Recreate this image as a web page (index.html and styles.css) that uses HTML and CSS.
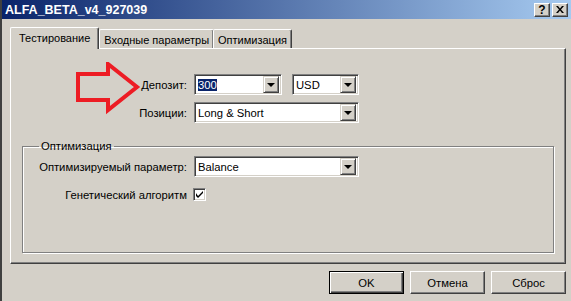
FILE: index.html
```html
<!DOCTYPE html>
<html lang="ru">
<head>
    <meta charset="UTF-8">
    <title>ALFA_BETA_v4_927039</title>
    <link rel="stylesheet" href="styles.css">
</head>
<body>
    <div class="window">
        <!-- заголовок окна -->
        <div class="titlebar">
            <span class="title">ALFA_BETA_v4_927039</span>
            <div class="caption-buttons">
                <button class="caption-btn">?</button>
                <button class="caption-btn">
                    <svg width="8" height="7" viewBox="0 0 8 7"><path d="M0 0h2l2 2.5L6 0h2L5 3.5 8 7H6L4 4.5 2 7H0l3-3.5z" fill="#000"/></svg>
                </button>
            </div>
        </div>

        <!-- вкладки -->
        <div class="tabs">
            <div class="tab active">Тестирование</div>
            <div class="tab">Входные параметры</div>
            <div class="tab">Оптимизация</div>
        </div>

        <div class="panel">
            <div class="form-row">
                <label class="field-label">Депозит:</label>
                <div class="combo combo-sm">
                    <span class="combo-text"><span class="selected">300</span></span>
                    <span class="combo-btn"><i class="tri"></i></span>
                </div>
                <div class="combo combo-xs">
                    <span class="combo-text">USD</span>
                    <span class="combo-btn"><i class="tri"></i></span>
                </div>
            </div>
            <div class="form-row">
                <label class="field-label">Позиции:</label>
                <div class="combo combo-lg">
                    <span class="combo-text">Long &amp; Short</span>
                    <span class="combo-btn"><i class="tri"></i></span>
                </div>
            </div>

            <fieldset class="group">
                <legend>Оптимизация</legend>
                <div class="form-row">
                    <label class="field-label group-label">Оптимизируемый параметр:</label>
                    <div class="combo combo-lg">
                        <span class="combo-text">Balance</span>
                        <span class="combo-btn"><i class="tri"></i></span>
                    </div>
                </div>
                <div class="form-row check-row">
                    <label class="field-label group-label">Генетический алгоритм</label>
                    <span class="checkbox">
                        <svg width="7" height="7" viewBox="0 0 7 7"><path d="M0 2v3l2 2L7 2V0L2 5z" fill="#000"/></svg>
                    </span>
                </div>
            </fieldset>
        </div>

        <div class="buttons">
            <button class="btn default">OK</button>
            <button class="btn">Отмена</button>
            <button class="btn">Сброс</button>
        </div>

        <!-- красная стрелка поверх окна -->
        <svg class="arrow" width="70" height="56" viewBox="0 0 70 56">
            <path d="M4 12H34V2L63 25L34 48V38H4Z" fill="none" stroke="#ed1c24" stroke-width="4" stroke-linejoin="miter"/>
        </svg>
    </div>
</body>
</html>
```

FILE: styles.css
```css
html, body {
    margin: 0;
    padding: 0;
}

body {
    width: 571px;
    height: 301px;
    overflow: hidden;
    background-color: #d4d0c8;
    font-family: "Liberation Sans", Arial, sans-serif;
    font-size: 11.25px;
    color: #000;
}

.window {
    position: relative;
    height: 301px;
    box-sizing: border-box;
    border-left: 2px solid #404040;
}

/* заголовок */
.titlebar {
    height: 19px;
    display: flex;
    align-items: center;
    justify-content: space-between;
    padding: 0 3px 0 3px;
    background: linear-gradient(to right, #0a246a, #a6caf0);
}

.title {
    color: #fff;
    font-weight: bold;
    font-size: 12.5px;
}

.caption-buttons {
    display: flex;
    gap: 2px;
}

.caption-btn {
    width: 16px;
    height: 14px;
    padding: 0;
    margin: 0;
    display: flex;
    align-items: center;
    justify-content: center;
    background-color: #d4d0c8;
    border: 1px solid;
    border-color: #fff #404040 #404040 #fff;
    box-shadow: inset -1px -1px 0 #808080;
    font-family: "Liberation Sans", Arial, sans-serif;
    font-weight: bold;
    font-size: 12px;
    line-height: 12px;
    color: #000;
}

/* вкладки */
.tabs {
    display: flex;
    align-items: flex-end;
    height: 21px;
    margin-top: 8px;
    padding-left: 8px;
    position: relative;
    z-index: 1;
    font-size: 11px;
}

.tab {
    height: 19px;
    box-sizing: border-box;
    padding: 4px 4px 0 4px;
    border: 1px solid;
    border-bottom: none;
    border-color: #fff #404040 #fff #fff;
    border-radius: 2px 2px 0 0;
    box-shadow: inset -1px 0 0 #808080;
    background-color: #d4d0c8;
}

.tab.active {
    height: 22px;
    margin-bottom: -1px;
    padding: 4px 8px 0 8px;
}

.tab + .tab {
    margin-left: -1px;
}

.tab.active + .tab {
    margin-left: 0;
}

/* панель */
.panel {
    height: 216px;
    margin-left: 8px;
    margin-right: 5px;
    box-sizing: border-box;
    border: 1px solid;
    border-color: #fff #404040 #404040 #fff;
    box-shadow: inset -1px -1px 0 #808080;
    padding: 25px 11px 0 11px;
}

.form-row {
    display: flex;
    align-items: center;
    gap: 7px;
    height: 21px;
    margin-bottom: 7px;
}

.field-label {
    width: 165px;
    text-align: right;
    white-space: nowrap;
}

.group-label {
    width: 153px;
}

.check-row {
    height: 13px;
    margin-top: 11px;
    gap: 6px;
}

/* выпадающие списки */
.combo {
    display: flex;
    align-items: center;
    height: 21px;
    box-sizing: border-box;
    background-color: #fff;
    border: 1px solid;
    border-color: #808080 #fff #fff #808080;
    box-shadow: inset 1px 1px 0 #404040, inset -1px -1px 0 #d4d0c8;
    padding: 2px;
}

.combo + .combo {
    margin-left: 3px;
}

.combo-sm { width: 88px; }
.combo-xs { width: 67px; }
.combo-lg { width: 165px; }

.combo-text {
    flex: 1;
    padding-left: 1px;
    white-space: nowrap;
}

.selected {
    background-color: #0a246a;
    color: #fff;
}

.combo-btn {
    width: 16px;
    height: 17px;
    box-sizing: border-box;
    display: flex;
    align-items: center;
    justify-content: center;
    background-color: #d4d0c8;
    border: 1px solid;
    border-color: #d4d0c8 #404040 #404040 #d4d0c8;
    box-shadow: inset 1px 1px 0 #fff, inset -1px -1px 0 #808080;
}

.tri {
    width: 0;
    height: 0;
    border-left: 4px solid transparent;
    border-right: 4px solid transparent;
    border-top: 4px solid #000;
    margin-top: 1px;
}

/* группа */
.group {
    margin: 17px 0 0 0;
    padding: 3px 0 0 11px;
    height: 113px;
    box-sizing: border-box;
    border: 1px solid #808080;
    box-shadow: inset 1px 1px 0 #fff, 1px 1px 0 #fff;
}

.group legend {
    padding: 0 2px;
    margin-left: 5px;
    line-height: 13px;
}

.checkbox {
    width: 13px;
    height: 13px;
    box-sizing: border-box;
    display: flex;
    align-items: center;
    justify-content: center;
    background-color: #fff;
    border: 1px solid;
    border-color: #808080 #fff #fff #808080;
    box-shadow: inset 1px 1px 0 #404040, inset -1px -1px 0 #d4d0c8;
}

/* кнопки */
.buttons {
    display: flex;
    justify-content: flex-end;
    gap: 6px;
    margin-top: 7px;
    padding-right: 5px;
}

.btn {
    width: 75px;
    height: 23px;
    padding: 0;
    box-sizing: border-box;
    background-color: #d4d0c8;
    border: 1px solid;
    border-color: #fff #404040 #404040 #fff;
    box-shadow: inset -1px -1px 0 #808080;
    font-family: "Liberation Sans", Arial, sans-serif;
    font-size: 11.25px;
    color: #000;
}

.btn.default {
    border: 1px solid #000;
    box-shadow: inset 1px 1px 0 #fff, inset -1px -1px 0 #404040, inset -2px -2px 0 #808080;
}

.arrow {
    position: absolute;
    left: 72px;
    top: 62px;
}
```
